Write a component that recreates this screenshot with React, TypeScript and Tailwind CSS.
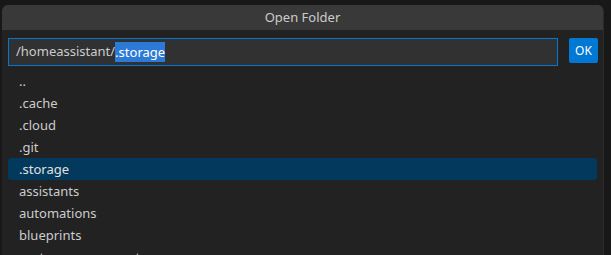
const entries = ['..', '.cache', '.cloud', '.git', '.storage', 'assistants', 'automations', 'blueprints', 'custom_components']

export default function App() {
    return (
        <div className="h-[255px] w-[611px] overflow-hidden bg-[#181818] pl-[2px] pt-[5px] font-['Noto_Sans',sans-serif] text-[13px] text-[#cccccc]">
            <div className="h-[260px] w-[602px] overflow-hidden rounded-t-[6px] border-r border-[#2b2b2b] bg-[#222222]">
                <div className="flex h-[25px] items-center justify-center bg-[#393939] text-[#cccccc]">Open Folder</div>
                <div className="flex items-start gap-[11px] pl-[6px] pr-[5px] pt-[8px]">
                    <div className="flex h-[28px] flex-1 items-center border border-[#0078d4] bg-[#313131] pl-[7px]">
                        <span>/homeassistant/</span>
                        <span className="bg-[#2c7ad6] leading-[20px] text-white">.storage</span>
                    </div>
                    <button className="h-[25px] w-[29px] rounded-[2px] bg-[#0078d4] text-[12px] text-white">OK</button>
                </div>
                <ul className="mt-[4px] px-[6px]">
                    {entries.map(entry => (
                        <li
                            key={entry}
                            className={entry === '.storage'
                                ? 'flex h-[22px] items-center rounded-[3px] bg-[#04395e] pl-[11px] pt-[2px] text-[#e0e0e0]'
                                : 'flex h-[22px] items-center pl-[11px] pt-[2px]'}
                        >
                            {entry}
                        </li>
                    ))}
                </ul>
            </div>
        </div>
    )
}
